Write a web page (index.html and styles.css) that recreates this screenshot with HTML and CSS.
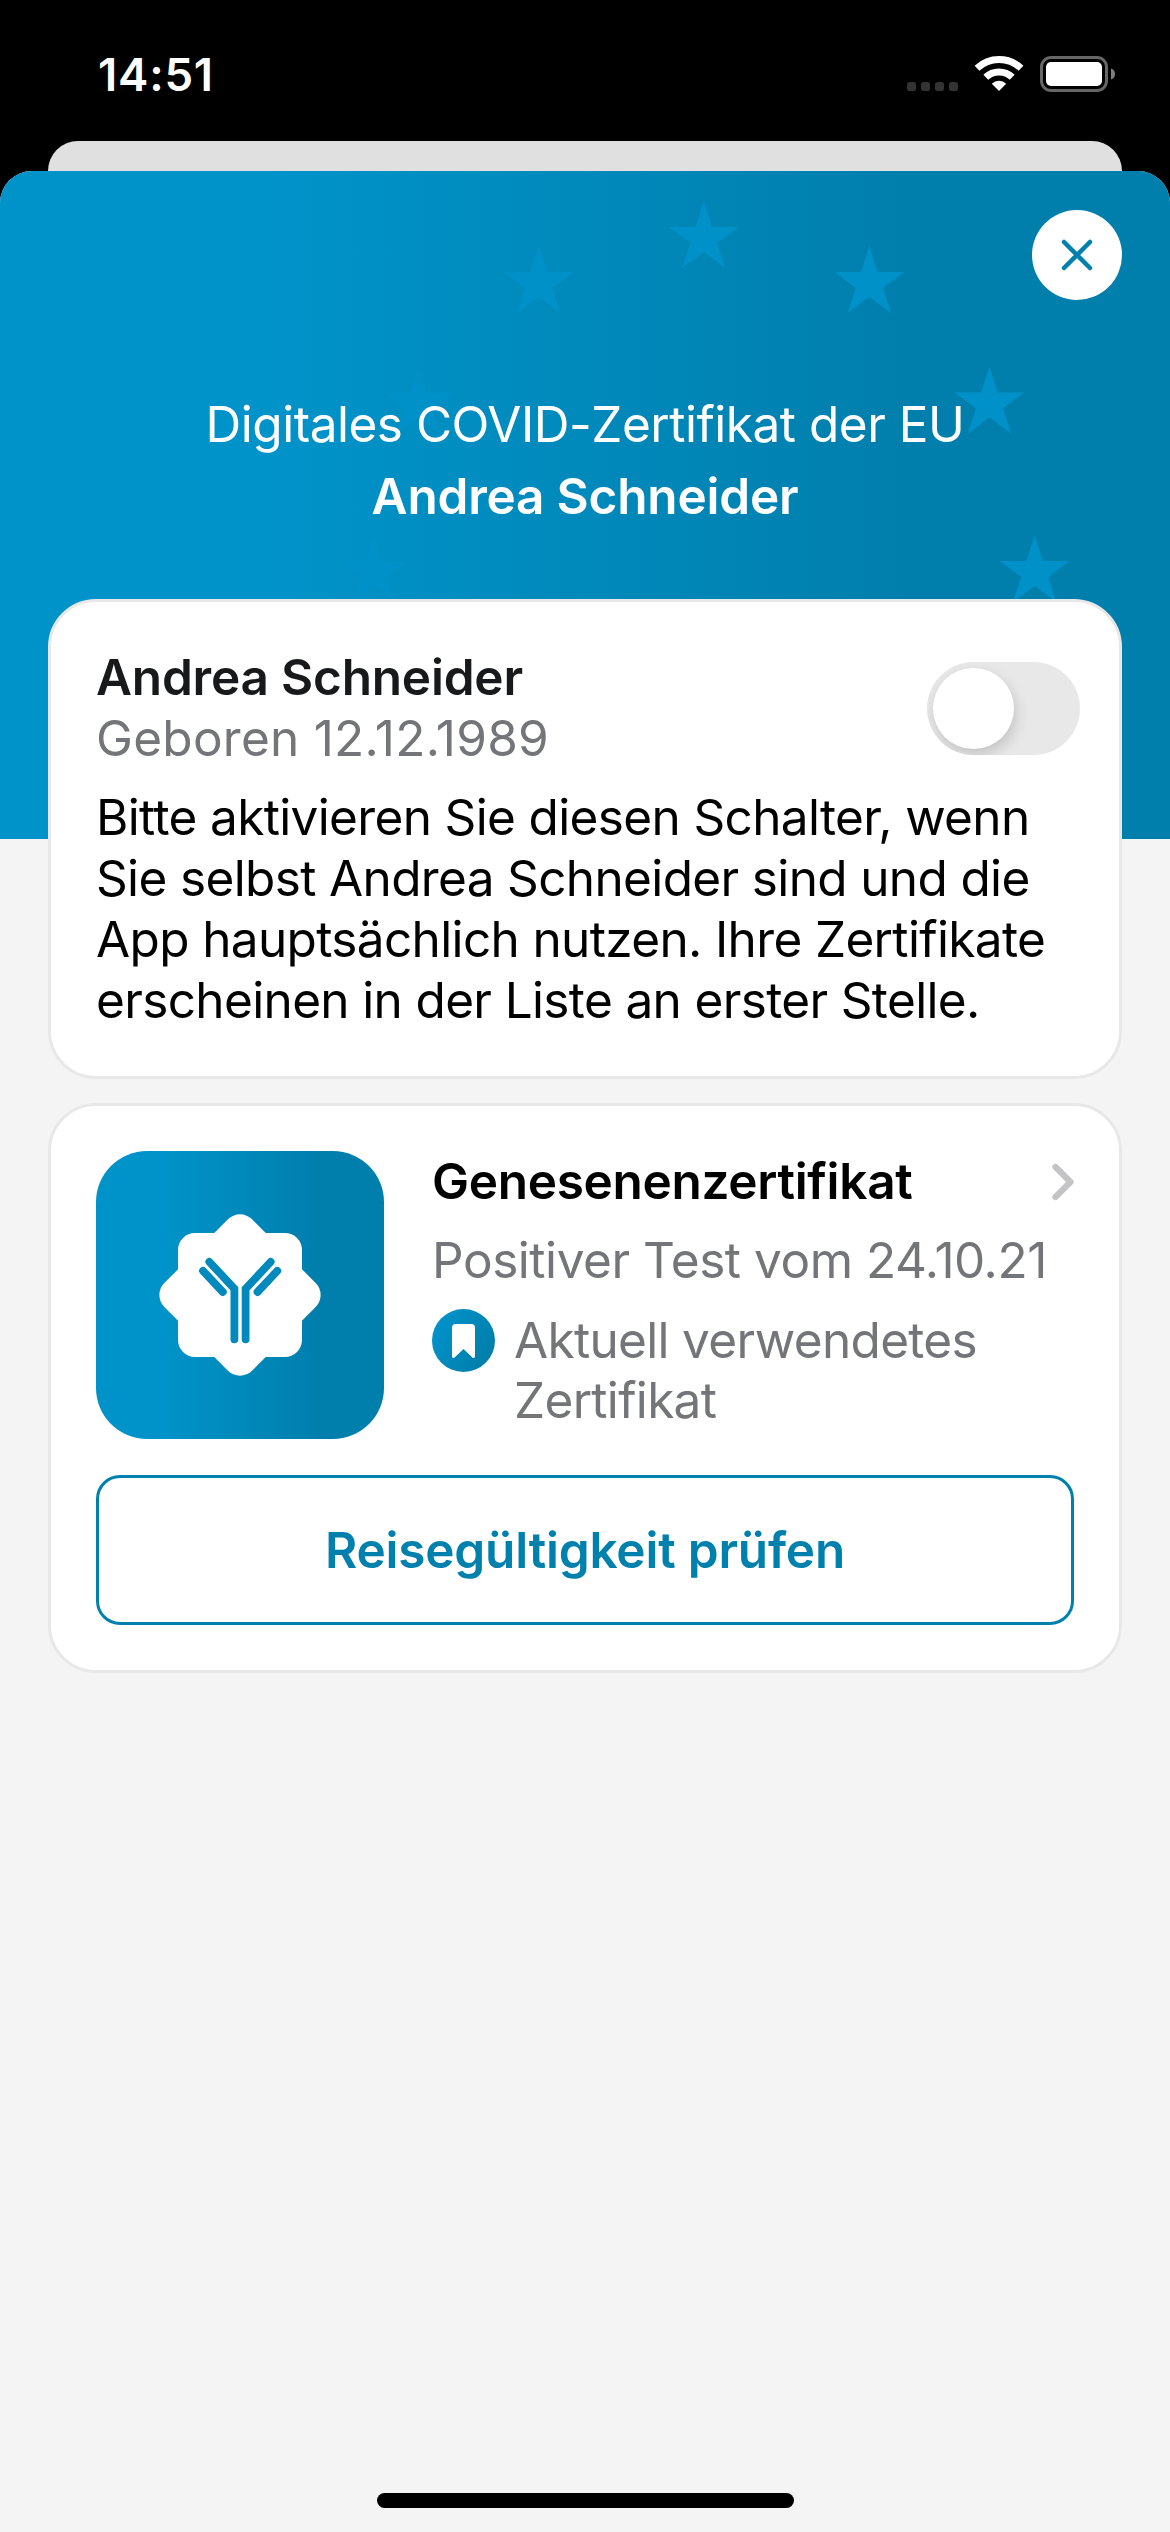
FILE: index.html
```html
<!DOCTYPE html>
<html lang="de">
<head>
<meta charset="utf-8">
<title>Digitales COVID-Zertifikat der EU</title>
<link rel="stylesheet" href="styles.css">
</head>
<body>
<div class="status-bar">
  <span class="status-time">14:51</span>
  <svg class="status-icons" width="208" height="40" viewBox="907 54 208 40" aria-hidden="true">
    <g fill="#333">
      <rect x="907" y="82" width="9" height="9" rx="2.8"/>
      <rect x="921" y="82" width="9" height="9" rx="2.8"/>
      <rect x="935" y="82" width="9" height="9" rx="2.8"/>
      <rect x="949" y="82" width="9" height="9" rx="2.8"/>
    </g>
    <g fill="none" stroke="#fff">
      <path d="M977 68.2A32 32 0 0 1 1021 68.2" stroke-width="7"/>
      <path d="M985.8 77.3A19 19 0 0 1 1012.2 77.3" stroke-width="7"/>
    </g>
    <path d="M999 91L991.8 83.7A10.2 10.2 0 0 1 1006.2 83.7Z" fill="#fff"/>
    <rect x="1041.5" y="57.500" width="65" height="33" rx="9.500" fill="none" stroke="#666" stroke-width="3"/>
    <rect x="1046" y="62" width="56" height="24" rx="5" fill="#fff"/>
    <path d="M1111 68.500C1113.500 69.300 1115 71.200 1115 74S1113.500 78.700 1111 79.500Z" fill="#7f7f7f"/>
  </svg>
</div>
<div class="backing-sheet"></div>
<main class="sheet">
  <header class="hero">
    <svg class="hero-stars" width="1170" height="668" viewBox="0 0 1170 668" aria-hidden="true">
      <defs>
        <path id="star" d="M0 0L8.300 26H35L13.500 42L21.700 67L0 51L-21.700 67L-13.500 42L-35 26H-8.300Z"/>
      </defs>
      <g fill="#0091c8">
        <use href="#star" x="373.500" y="364"/>
        <use href="#star" x="418.500" y="195.500"/>
        <use href="#star" x="538.700" y="75"/>
        <use href="#star" x="703.800" y="30"/>
        <use href="#star" x="869.300" y="75"/>
        <use href="#star" x="989.500" y="195.500"/>
        <use href="#star" x="1034.700" y="364"/>
      </g>
    </svg>
    <button class="close-button" aria-label="Schließen">
      <svg width="90" height="90" viewBox="0 0 90 90"><path d="M32 32L58 58M58 32L32 58" fill="none" stroke="#0080ad" stroke-width="4.500" stroke-linecap="round"/></svg>
    </button>
    <div class="hero-title">
      <div class="hero-caption">Digitales COVID-Zertifikat der EU</div>
      <div class="hero-name">Andrea Schneider</div>
    </div>
  </header>
  <div class="cards">
    <section class="card">
      <div class="person">
        <div>
          <div class="person-name">Andrea Schneider</div>
          <div class="muted birth-date">Geboren 12.12.1989</div>
        </div>
        <div class="toggle"><span class="toggle-knob"></span></div>
      </div>
      <p class="hint">Bitte aktivieren Sie diesen Schalter, wenn<br>Sie selbst Andrea Schneider sind und die<br>App hauptsächlich nutzen. Ihre Zertifikate<br>erscheinen in der Liste an erster Stelle.</p>
    </section>
    <section class="card">
      <div class="certificate">
        <div class="tile">
          <svg width="288" height="288" viewBox="0 0 288 288" aria-hidden="true">
            <rect x="82" y="82" width="124" height="124" rx="17" fill="#fff"/>
            <rect x="82" y="82" width="124" height="124" rx="17" fill="#fff" transform="rotate(45 144 144)"/>
            <g fill="none" stroke="#0089bc" stroke-width="7.800" stroke-linecap="round">
              <path d="M138.400 188.300V137.800L113.300 110.800"/>
              <path d="M149.600 188.300V137.800L174.700 110.800"/>
              <path d="M107 119.900L126.800 141"/>
              <path d="M181.300 119.900L161.500 141"/>
            </g>
          </svg>
        </div>
        <div class="certificate-text">
          <div class="certificate-head">
            <span class="certificate-title">Genesenenzertifikat</span>
            <svg class="chevron" width="22" height="38" viewBox="0 0 22 38" aria-hidden="true"><path d="M3.500 4L18.500 19L3.500 34" fill="none" stroke="#c4c4c6" stroke-width="6.300" stroke-linecap="round" stroke-linejoin="round"/></svg>
          </div>
          <div class="muted test-date">Positiver Test vom 24.10.21</div>
          <div class="current">
            <svg width="63" height="63" viewBox="0 0 63 63" aria-hidden="true">
              <defs><linearGradient id="badge" x1="0" y1="0.200" x2="1" y2="0.800"><stop offset="0.100" stop-color="#0091c8"/><stop offset="0.850" stop-color="#0080ad"/></linearGradient></defs>
              <circle cx="31.500" cy="31.500" r="31.500" fill="url(#badge)"/>
              <path d="M20 18.500a3.500 3.500 0 0 1 3.500-3.500h16a3.500 3.500 0 0 1 3.500 3.500v29a1.500 1.500 0 0 1-2.600 1L31.500 40l-8.900 8.500a1.500 1.500 0 0 1-2.600-1z" fill="#fff"/>
            </svg>
            <div class="muted current-label">Aktuell verwendetes<br>Zertifikat</div>
          </div>
        </div>
      </div>
      <button class="check-button">Reisegültigkeit prüfen</button>
    </section>
  </div>
  <div class="home-indicator"></div>
</main>
</body>
</html>
```
FILE: styles.css
```css
* { box-sizing: border-box; }

body {
  margin: 0;
  width: 1170px;
  height: 2532px;
  display: flex;
  flex-direction: column;
  overflow: hidden;
  background: #000;
  color: #000;
  font: 400 49.5px/61px Inter, "Liberation Sans", sans-serif;
  -webkit-font-smoothing: antialiased;
}

button { margin: 0; padding: 0; font: inherit; }

.status-bar {
  height: 141px;
  padding: 54px 55px 0 98px;
  display: flex;
  justify-content: space-between;
  align-items: flex-start;
}
.status-time {
  color: #fff;
  font-size: 45.5px;
  line-height: 41px;
  font-weight: 600;
  letter-spacing: 0.8px;
}

.backing-sheet {
  height: 30px;
  margin: 0 48px;
  border-radius: 30px 30px 0 0;
  background: #e0e0e0;
}

.sheet {
  flex: 1;
  display: flex;
  flex-direction: column;
  border-radius: 32px 32px 0 0;
  overflow: hidden;
  background: #f4f4f4;
}

.hero {
  position: relative;
  flex: none;
  height: 668px;
  padding: 39px 48px 0;
  display: flex;
  flex-direction: column;
  background: linear-gradient(90deg, #0093c9 23%, #007fad 77%);
}
.hero-stars { position: absolute; inset: 0; }
.close-button {
  position: relative;
  align-self: flex-end;
  width: 90px;
  height: 90px;
  border: 0;
  border-radius: 50%;
  background: #fff;
}
.close-button svg { display: block; }
.hero-title {
  position: relative;
  margin-top: 88px;
  line-height: 72px;
  text-align: center;
  color: #fff;
}
.hero-caption { letter-spacing: -0.48px; }
.hero-name { font-weight: 600; letter-spacing: -0.2px; }

.cards {
  position: relative;
  flex: 1;
  margin-top: -240px;
  padding: 0 48px;
  display: flex;
  flex-direction: column;
  gap: 24px;
}
.card {
  padding: 45px;
  border: 3px solid #e8e8e8;
  border-radius: 48px;
  background: #fff;
}

.person {
  display: flex;
  justify-content: space-between;
  margin-right: -6px;
}
.person-name { font-weight: 600; color: #18191a; letter-spacing: -0.2px; }
.muted { color: #737578; }
.birth-date { letter-spacing: 0.26px; }
.toggle {
  width: 153px;
  height: 93px;
  margin-top: 15px;
  padding: 6px;
  border-radius: 47px;
  overflow: hidden;
  background: #e8e8e8;
}
.toggle-knob {
  display: block;
  width: 81px;
  height: 81px;
  border-radius: 50%;
  background: #fff;
  box-shadow: 2px 6px 14px rgba(0, 0, 0, 0.16);
}
.hint { margin: 18px 0 0; white-space: nowrap; letter-spacing: -0.64px; }

.certificate { display: flex; gap: 48px; }
.tile {
  flex: none;
  width: 288px;
  height: 288px;
  border-radius: 51px;
  background: linear-gradient(90deg, #0093c9 23%, #007fad 77%);
}
.certificate-text {
  flex: 1;
  display: flex;
  flex-direction: column;
  gap: 18px;
  white-space: nowrap;
}
.certificate-head {
  display: flex;
  justify-content: space-between;
}
.certificate-title { font-weight: 600; letter-spacing: -0.3px; }
.chevron { margin-top: 12px; }
.test-date { letter-spacing: -0.45px; }
.current {
  display: flex;
  gap: 19px;
  line-height: 60px;
  letter-spacing: -0.68px;
}
.current svg { flex: none; }
.current-label { padding-top: 1px; }

.check-button {
  display: block;
  width: 100%;
  height: 150px;
  margin-top: 36px;
  border: 3px solid #0080ad;
  border-radius: 24px;
  background: #fff;
  color: #0080ad;
  font-weight: 600;
  letter-spacing: -0.2px;
}

.home-indicator {
  width: 417px;
  height: 15px;
  margin: 0 auto 24px;
  border-radius: 8px;
  background: #000;
}
```
